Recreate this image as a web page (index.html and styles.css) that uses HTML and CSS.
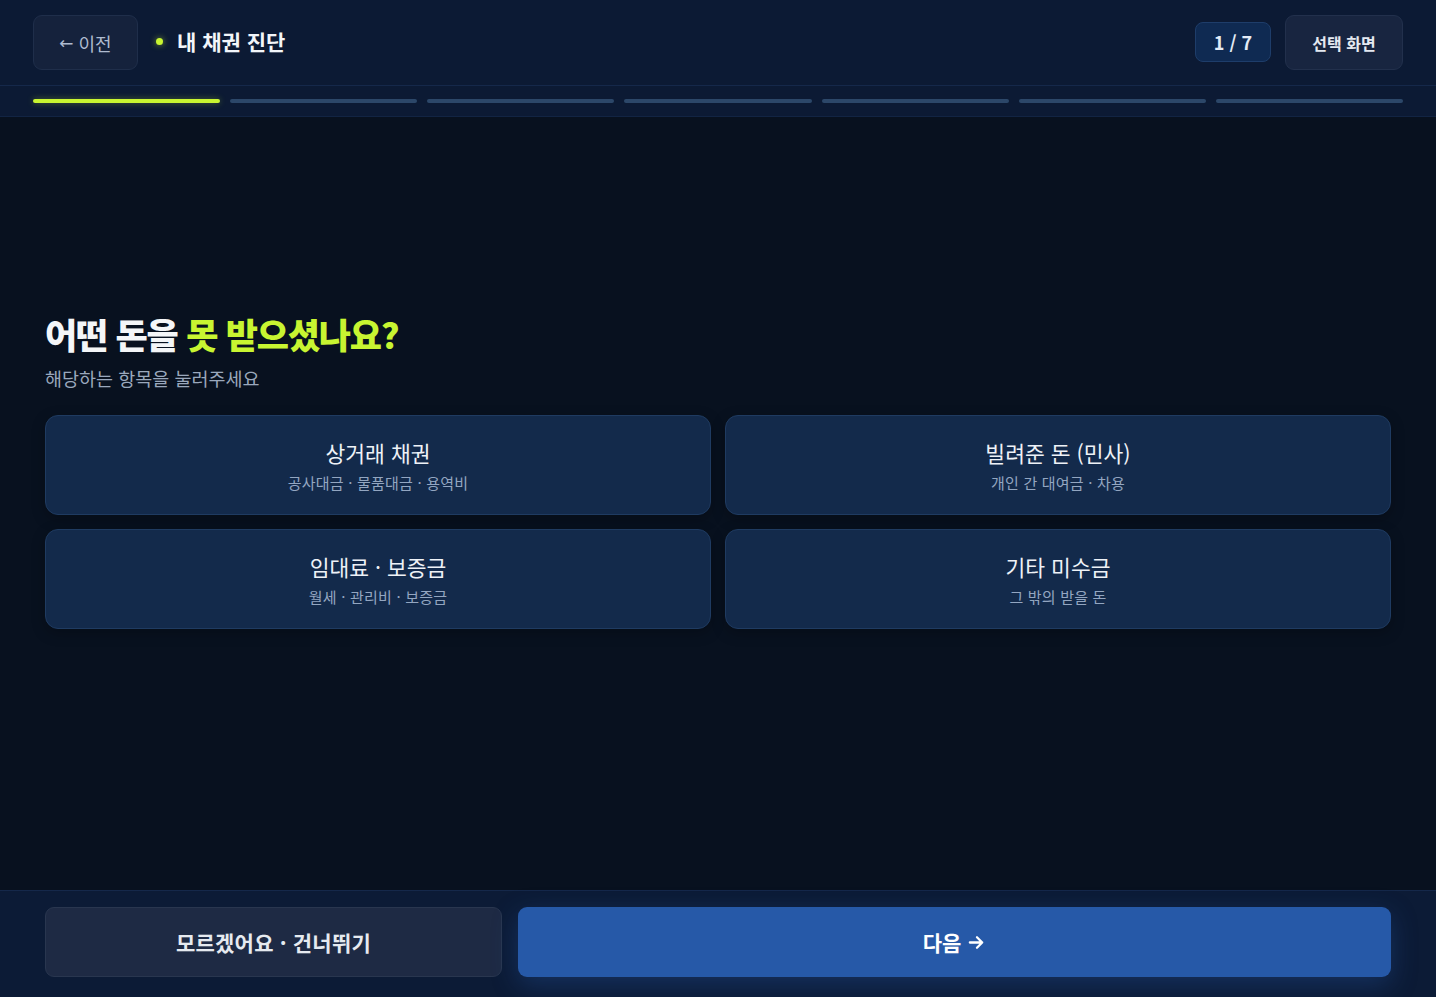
FILE: index.html
```html
<!DOCTYPE html>
<html lang="ko">
<head>
<meta charset="utf-8">
<title>내 채권 진단</title>
<link rel="stylesheet" href="styles.css">
</head>
<body>
<div class="app">
  <header class="topbar">
    <div class="topbar-row">
      <div class="left">
        <button class="btn-back"><span class="arrow">←</span> 이전</button>
        <div class="title"><span class="dot"></span>내 채권 진단</div>
      </div>
      <div class="right">
        <div class="counter">1 / 7</div>
        <button class="btn-choice">선택 화면</button>
      </div>
    </div>
    <div class="progress">
      <span class="seg active"></span>
      <span class="seg"></span>
      <span class="seg"></span>
      <span class="seg"></span>
      <span class="seg"></span>
      <span class="seg"></span>
      <span class="seg"></span>
    </div>
  </header>

  <main class="main">
    <h1 class="question">어떤 돈을 <span class="accent">못 받으셨나요?</span></h1>
    <p class="hint">해당하는 항목을 눌러주세요</p>
    <div class="options">
      <button class="option">
        <span class="opt-title">상거래 채권</span>
        <span class="opt-sub">공사대금 · 물품대금 · 용역비</span>
      </button>
      <button class="option">
        <span class="opt-title">빌려준 돈 (민사)</span>
        <span class="opt-sub">개인 간 대여금 · 차용</span>
      </button>
      <button class="option">
        <span class="opt-title">임대료 · 보증금</span>
        <span class="opt-sub">월세 · 관리비 · 보증금</span>
      </button>
      <button class="option">
        <span class="opt-title">기타 미수금</span>
        <span class="opt-sub">그 밖의 받을 돈</span>
      </button>
    </div>
  </main>

  <footer class="footer">
    <button class="btn-skip">모르겠어요 · 건너뛰기</button>
    <button class="btn-next">다음 <svg class="next-arrow" viewBox="0 0 20 20" width="19" height="19"><path d="M3 10h13M10.5 4.5L16 10l-5.5 5.5" fill="none" stroke="currentColor" stroke-width="2.4" stroke-linecap="round" stroke-linejoin="round"/></svg></button>
  </footer>
</div>
</body>
</html>
```

FILE: styles.css
```css
* { box-sizing: border-box; }

html, body {
  margin: 0;
  padding: 0;
  height: 100%;
}

body {
  background: #08111f;
  font-family: "Noto Sans CJK KR", "Noto Sans", sans-serif;
  color: #eef2f7;
}

button {
  font-family: inherit;
  cursor: pointer;
}

.app {
  height: 997px;
  display: flex;
  flex-direction: column;
}

/* Header */
.topbar {
  background: #0c1a34;
  border-bottom: 1px solid #122443;
}

.topbar-row {
  height: 86px;
  padding: 15px 33px 0 33px;
  display: flex;
  justify-content: space-between;
  align-items: flex-start;
  border-bottom: 1px solid #15284a;
}

.left, .right {
  display: flex;
  align-items: center;
}

.left { gap: 18px; height: 55px; }
.right { gap: 14px; align-items: flex-start; }

.btn-back {
  width: 105px;
  height: 55px;
  border-radius: 9px;
  background: #15223c;
  border: 1px solid #1f2e4a;
  color: #aebbd0;
  font-size: 18px;
  display: flex;
  align-items: center;
  justify-content: center;
  gap: 5px;
}

.btn-back .arrow {
  font-size: 17px;
  font-family: "DejaVu Sans", sans-serif;
}

.title {
  display: flex;
  align-items: center;
  gap: 14px;
  font-size: 21px;
  line-height: 1;
  padding-bottom: 3px;
  font-weight: 700;
  color: #f3f6fa;
}

.dot {
  width: 7px;
  height: 7px;
  border-radius: 50%;
  background: #c8f531;
  box-shadow: 0 0 6px rgba(200, 245, 49, 0.6);
}

.counter {
  width: 76px;
  height: 40px;
  margin-top: 7px;
  border-radius: 8px;
  background: #0f2a52;
  border: 1px solid #1e3d6a;
  color: #e3ebf6;
  font-size: 18px;
  font-weight: 700;
  display: flex;
  align-items: center;
  justify-content: center;
}

.btn-choice {
  width: 118px;
  height: 55px;
  border-radius: 9px;
  background: #182540;
  border: 1px solid #22304c;
  color: #e4e9f1;
  font-size: 16px;
  font-weight: 700;
}

.progress {
  display: flex;
  gap: 10px;
  padding: 13px 33px 13px 33px;
}

.seg {
  flex: 1;
  height: 4px;
  border-radius: 2px;
  background: #2c4769;
}

.seg.active {
  background: #c8f531;
  box-shadow: 0 0 6px rgba(200, 245, 49, 0.35);
}

/* Main */
.main {
  flex: 1;
  padding: 194px 45px 0 45px;
}

.question {
  margin: 0;
  font-size: 35px;
  line-height: 1.3;
  font-weight: 800;
  letter-spacing: -1.2px;
  color: #f4f6f8;
}

.accent { color: #c8f531; }

.hint {
  margin: 9px 0 0 0;
  font-size: 18.5px;
  line-height: 1.4;
  color: #9aa8bc;
}

.options {
  margin-top: 24px;
  display: grid;
  grid-template-columns: 1fr 1fr;
  gap: 14px;
}

.option {
  height: 100px;
  border-radius: 13px;
  background: #132a4b;
  border: 1px solid #1f3b61;
  display: flex;
  flex-direction: column;
  align-items: center;
  justify-content: center;
  gap: 6px;
  box-shadow: 0 4px 14px rgba(0, 0, 0, 0.25);
}

.opt-title {
  font-size: 21.5px;
  line-height: 1.35;
  color: #eef2f7;
}

.opt-sub {
  font-size: 15px;
  line-height: 1.35;
  color: #93a6c1;
  letter-spacing: 0.2px;
}

/* Footer */
.footer {
  background: #0c1b36;
  border-top: 1px solid #15284a;
  padding: 16px 45px 20px 45px;
  display: grid;
  grid-template-columns: 457fr 873fr;
  gap: 16px;
}

.btn-skip {
  height: 70px;
  border-radius: 9px;
  background: #1e2a44;
  border: 1px solid #29364f;
  color: #e6eaf0;
  font-size: 21px;
  font-weight: 600;
  letter-spacing: 0.2px;
}

.btn-next {
  height: 70px;
  border-radius: 9px;
  background: #2659a8;
  border: none;
  color: #ffffff;
  font-size: 21px;
  font-weight: 700;
  display: flex;
  align-items: center;
  justify-content: center;
  gap: 6px;
  box-shadow: 0 8px 26px rgba(37, 89, 168, 0.35);
}

.next-arrow { display: block; }
```
